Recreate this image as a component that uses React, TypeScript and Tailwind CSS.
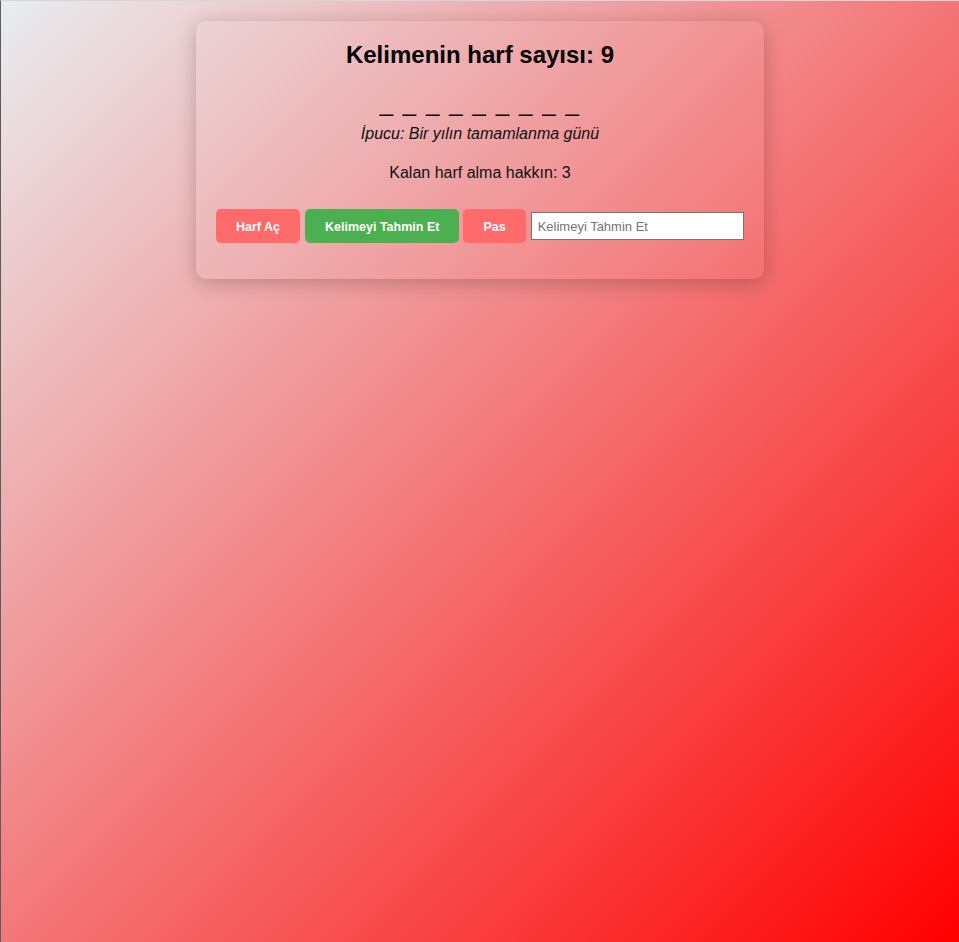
const App = () => {
  const letters = 9;
  const hidden = Array(letters).fill('_').join(' ');

  return (
    <div
      className="min-h-screen border-l border-t border-l-[#5c5c5c] border-t-[#d6d6d6] bg-[linear-gradient(135deg,#e8edf0,#ff0000)] pt-[20px] text-black"
      style={{ fontFamily: '"Liberation Sans", Arial, sans-serif' }}
    >
      <div className="mx-auto w-[568px] rounded-[10px] bg-white/[0.04] px-[20px] pt-[20px] pb-[36px] text-center shadow-[0_4px_20px_rgba(0,0,0,0.22)]">
        <h2 className="text-[24px] font-bold leading-[28px]">Kelimenin harf sayısı: {letters}</h2>

        <p className="mt-[20px] text-[24px] leading-[28px] tracking-[1.6px]">{hidden}</p>
        <p className="mt-[8px] text-[16px] italic leading-[18px] text-[#111]">İpucu: Bir yılın tamamlanma günü</p>

        <p className="mt-[21px] text-[16px] leading-[18px] text-[#111]">Kalan harf alma hakkın: 3</p>

        <div className="mt-[27px] flex items-center">
          <button className="rounded-[5px] bg-[#ff6b6b] px-[20px] pt-[11px] pb-[9px] text-[12.5px] font-bold leading-[14px] text-white">
            Harf Aç
          </button>
          <button className="ml-[5px] rounded-[5px] bg-[#4caf50] px-[20px] pt-[11px] pb-[9px] text-[12.5px] font-bold leading-[14px] text-white">
            Kelimeyi Tahmin Et
          </button>
          <button className="ml-[4px] rounded-[5px] bg-[#ff6b6b] px-[20px] pt-[11px] pb-[9px] text-[12.5px] font-bold leading-[14px] text-white">
            Pas
          </button>
          <input
            type="text"
            placeholder="Kelimeyi Tahmin Et"
            className="ml-[5px] h-[28px] flex-1 border border-[#767676] bg-white px-[6px] text-[13px] text-black placeholder:text-[#757575] outline-none"
          />
        </div>
      </div>
    </div>
  );
};

export default App;
